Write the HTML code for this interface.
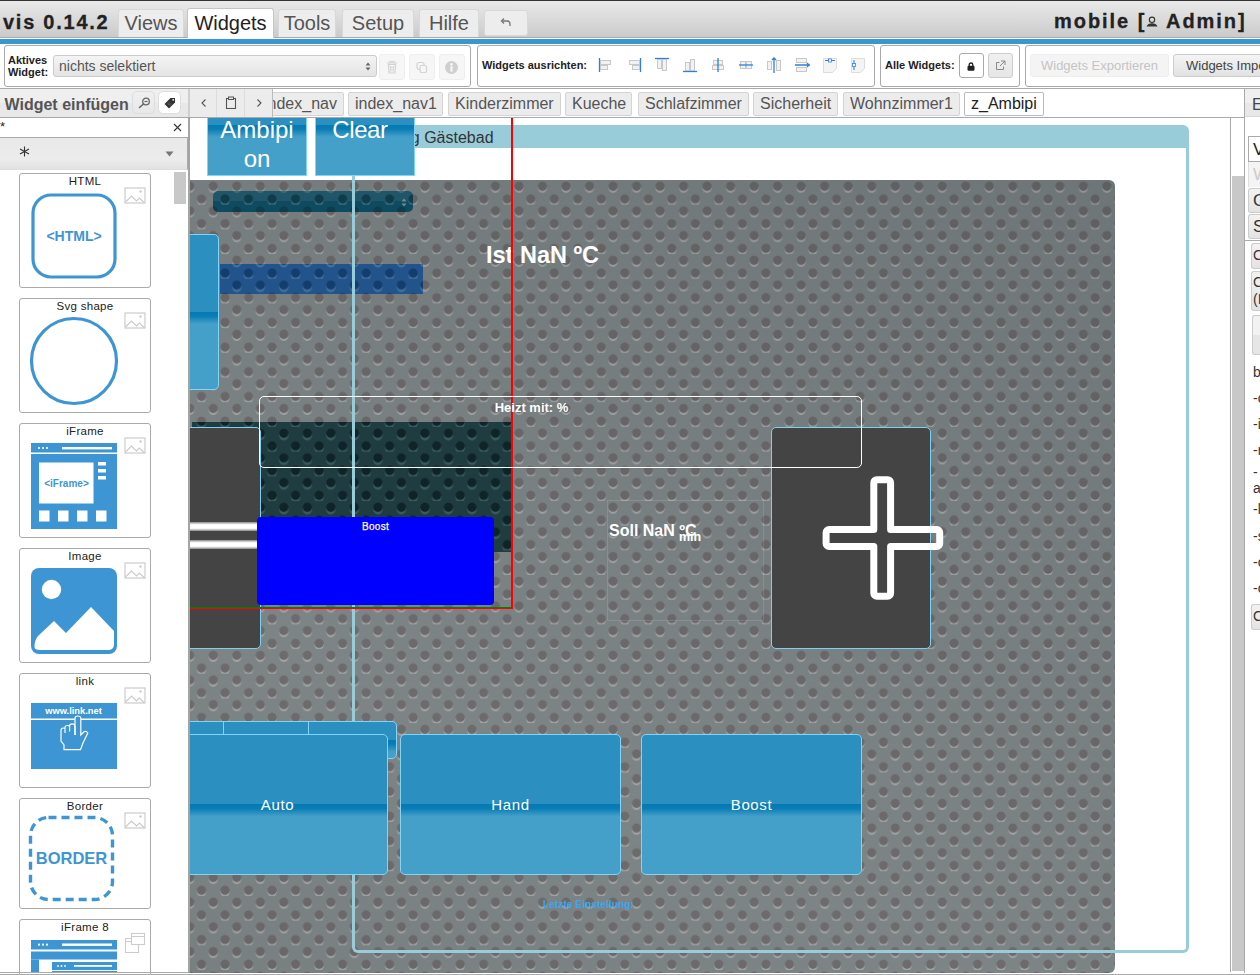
<!DOCTYPE html>
<html><head><meta charset="utf-8">
<style>
*{box-sizing:border-box;margin:0;padding:0}
html,body{width:1260px;height:975px;overflow:hidden;background:#fff;font-family:"Liberation Sans",sans-serif;color:#222;position:relative}
.a{position:absolute}
#top{left:0;top:0;width:1260px;height:38px;border-top:1px solid #333;background:linear-gradient(#e9e9e9,#cbcbcb);border-bottom:1px solid #aaa}
#title{left:3px;top:9.8px;font-size:20px;font-weight:bold;letter-spacing:1.75px;-webkit-text-stroke:0.3px #222;color:#222;line-height:24px}
.tab{top:9px;height:28px;background:#ededed;border:1px solid #d8d8d8;border-bottom:none;border-radius:3px 3px 0 0;font-size:20px;color:#555;line-height:27px;text-align:center}
.tab.act{background:#fff;border-color:#c5c5c5;color:#222;top:8px;height:30px;line-height:29px}
#blue{left:0;top:39px;width:1260px;height:5px;background:#3a96d2}
#user,#user2{top:9px;font-size:20px;font-weight:bold;letter-spacing:1.95px;-webkit-text-stroke:0.3px #222;color:#222;line-height:24px;white-space:nowrap}
#user2{left:1166px}
.panel{top:45px;height:42px;border:1px solid #aaa;border-radius:3px;background:#fff}
#tbline{left:0;top:88px;width:1260px;height:1px;background:#aaa}

.lbl{font-size:11px;font-weight:bold;color:#222;line-height:12px}
.sel{border:1px solid #ccc;border-radius:3px;background:linear-gradient(#f4f4f4,#e4e4e4);font-size:14px;color:#555;line-height:20px;padding-left:5px}
.ibtn{width:26px;height:26px;background:#f6f6f6;border:1px solid #eee;border-radius:3px}
.alg{top:57px;width:16px;height:16px}
.xbtn{white-space:nowrap;overflow:hidden;border:1px solid #ddd;border-radius:3px;font-size:13px;line-height:21px;text-align:center}

#row3{left:0;top:89px;width:1245px;height:29px;background:#fff;border-bottom:1px solid #aaa}
#row3l{left:0;top:89px;width:188px;height:28px;background:linear-gradient(#efefef 0,#efefef 50%,#e8e8e8 50%,#e8e8e8 100%)}
#wein{left:4.5px;top:94.5px;font-size:16px;font-weight:bold;color:#555;line-height:19px}
.sbtn{top:91px;width:23px;height:23px;border:1px solid #ddd;border-radius:5px;background:linear-gradient(#f0f0f0,#e8e8e8)}
#sep{left:188px;top:117px;width:2px;height:856px;background:#a4a4a4}
.nav{top:89px;height:28px;width:28px;border-right:1px solid #dcdcdc;background:#ececec}
.vt{top:92px;height:24px;border:1px solid #d4d4d4;background:#ececec;font-size:16px;color:#555;line-height:22px;text-align:left;padding-left:6px;border-radius:2px;white-space:nowrap}
.vt.act{background:#fff;border-color:#bbb;color:#222}
#filt{left:0;top:118px;width:188px;height:20px;background:#fff;border-bottom:1px solid #aaa}
#dd{left:0;top:138px;width:188px;height:32px;background:linear-gradient(#e9e9e9,#ececec 70%,#e2e2e2);border-bottom:1px solid #ddd;border-right:1px solid #aaa}
.card{left:19px;width:132px;height:115px;border:1px solid #aaa;border-radius:3px;background:#fff}
.ctit{left:19px;width:132px;text-align:center;font-size:11.5px;color:#222;line-height:13px;letter-spacing:0.3px}

#cv{left:190px;top:118px;width:1040px;height:855px;overflow:hidden;background:#fff}
#cv .a{position:absolute}
.perf{background-color:#7b8284;
 background-image:
  radial-gradient(circle at 5.88px 6.17px,#6a6869 0,#6a6869 4.1px,rgba(106,104,105,0) 5px),
  radial-gradient(circle at 17.64px 18.92px,#6a6869 0,#6a6869 4.1px,rgba(106,104,105,0) 5px),
  radial-gradient(circle at 5.88px 8.37px,#a0a3a4 0,#a0a3a4 4.0px,rgba(160,163,164,0) 4.9px),
  radial-gradient(circle at 17.64px 21.12px,#a0a3a4 0,#a0a3a4 4.0px,rgba(160,163,164,0) 4.9px);
 background-size:23.52px 24.70px}
.jqm{background:linear-gradient(#2b8fc0 0,#2b8fc0 50%,#0479b3 50%,#0a7db5 calc(50% + 4px),#45a0c9 calc(50% + 12px),#45a0c9 100%);border:1px solid #7fd4f8;border-radius:5px;color:#fff;text-align:center}
.frm{border:3px solid #99ccd9;border-top:none;border-radius:0 0 6px 6px}
</style></head><body>
<div id="top" class="a"></div>
<div id="title" class="a">vis 0.14.2</div>
<div class="a tab" style="left:118px;width:66px">Views</div>
<div class="a tab act" style="left:187px;width:87px">Widgets</div>
<div class="a tab" style="left:278px;width:58px">Tools</div>
<div class="a tab" style="left:342px;width:72px">Setup</div>
<div class="a tab" style="left:419px;width:60px">Hilfe</div>
<div class="a tab" style="left:484px;width:44px;top:10px;height:26px;border-radius:3px;border-bottom:1px solid #d8d8d8"></div>
<div id="user" class="a" style="left:1054px">mobile [</div><div id="user2" class="a">Admin]</div>
<svg class="a" style="left:1146px;top:16px" width="12" height="11" viewBox="0 0 12 11"><circle cx="6" cy="3.8" r="2.7" fill="none" stroke="#333" stroke-width="1.1"/><path d="M0.5 10.5Q2 7.2 6 7.2T11.5 10.5Z" fill="#333"/></svg>
<svg class="a" style="left:500px;top:17px" width="12" height="10" viewBox="0 0 12 10"><path d="M4 1.5L1.5 4 4 6.5" fill="none" stroke="#777" stroke-width="1.3"/><path d="M2 4H7Q10 4 10 7V9" fill="none" stroke="#777" stroke-width="1.3"/></svg>
<div id="blue" class="a"></div>

<div class="a panel" style="left:4px;width:467px"></div>
<div class="a panel" style="left:477px;width:398px"></div>
<div class="a panel" style="left:880px;width:140px"></div>
<div class="a panel" style="left:1025px;width:260px"></div>
<div id="tbline" class="a"></div>

<div class="a lbl" style="left:8px;top:54px">Aktives<br>Widget:</div>
<div class="a sel" style="left:53px;top:55px;width:324px;height:22px">nichts selektiert</div>
<svg class="a" style="left:364.5px;top:62px" width="6" height="9" viewBox="0 0 6 9"><path d="M3 0.5L5.5 3.6H0.5Z M3 8.5L5.5 5.4H0.5Z" fill="#666"/></svg>
<div class="a ibtn" style="left:379px;top:54px"></div>
<div class="a ibtn" style="left:409px;top:54px"></div>
<div class="a ibtn" style="left:439px;top:54px"></div>
<svg class="a" style="left:384px;top:59px" width="16" height="16" viewBox="0 0 16 16"><g fill="none" stroke="#d2d2d2" stroke-width="1.2"><path d="M3 4h10M6 3.8V2.5h4v1.3M4.5 5.5h7l-0.6 8.5H5.1Z"/><path d="M6.8 7v5.5M9.2 7v5.5"/></g></svg>
<svg class="a" style="left:414px;top:59px" width="16" height="16" viewBox="0 0 16 16"><g fill="none" stroke="#d2d2d2" stroke-width="1.2"><rect x="3" y="3.5" width="7" height="7" rx="2"/><rect x="6" y="6.5" width="6.5" height="7" rx="1.5" fill="#f6f6f6"/></g></svg>
<svg class="a" style="left:444px;top:60px" width="15" height="15" viewBox="0 0 15 15"><circle cx="7.5" cy="7.5" r="6.5" fill="#cfcfcf"/><rect x="6.4" y="6.2" width="2.2" height="5.5" fill="#f6f6f6"/><circle cx="7.5" cy="4.2" r="1.3" fill="#f6f6f6"/></svg>

<div class="a lbl" style="left:482px;top:59px">Widgets ausrichten:</div>
<svg class="a alg" style="left:598px" width="16" height="16" viewBox="0 0 16 16"><path d="M1.5 1v14" stroke="#2d7fe0" stroke-width="1.3"/><rect x="2.5" y="3.5" width="10" height="4" fill="#f2f2f2" stroke="#c8c8c8"/><rect x="2.5" y="8.5" width="7" height="4" fill="#f2f2f2" stroke="#c8c8c8"/></svg>
<svg class="a alg" style="left:626px" width="16" height="16" viewBox="0 0 16 16"><path d="M14.5 1v14" stroke="#2d7fe0" stroke-width="1.3"/><rect x="3.5" y="3.5" width="10" height="4" fill="#f2f2f2" stroke="#c8c8c8"/><rect x="6.5" y="8.5" width="7" height="4" fill="#f2f2f2" stroke="#c8c8c8"/></svg>
<svg class="a alg" style="left:654px" width="16" height="16" viewBox="0 0 16 16"><path d="M1 1.5h14" stroke="#2d7fe0" stroke-width="1.3"/><rect x="3.5" y="2.5" width="4" height="9" fill="#f2f2f2" stroke="#c8c8c8"/><rect x="8.5" y="2.5" width="4" height="11" fill="#f2f2f2" stroke="#c8c8c8"/></svg>
<svg class="a alg" style="left:682px" width="16" height="16" viewBox="0 0 16 16"><path d="M1 14.5h14" stroke="#2d7fe0" stroke-width="1.3"/><rect x="3.5" y="5.5" width="4" height="8" fill="#f2f2f2" stroke="#c8c8c8"/><rect x="8.5" y="2.5" width="4" height="11" fill="#f2f2f2" stroke="#c8c8c8"/></svg>
<svg class="a alg" style="left:710px" width="16" height="16" viewBox="0 0 16 16"><rect x="3.5" y="3.5" width="9" height="4" fill="#f2f2f2" stroke="#c8c8c8"/><rect x="2.5" y="8.5" width="11" height="4" fill="#f2f2f2" stroke="#c8c8c8"/><path d="M8 1v14" stroke="#2d7fe0" stroke-width="1.3"/></svg>
<svg class="a alg" style="left:738px" width="16" height="16" viewBox="0 0 16 16"><rect x="2.5" y="4.5" width="5" height="7" fill="#f2f2f2" stroke="#c8c8c8"/><rect x="8.5" y="4.5" width="5" height="7" fill="#f2f2f2" stroke="#c8c8c8"/><path d="M1 8h14" stroke="#2d7fe0" stroke-width="1.3"/></svg>
<svg class="a alg" style="left:766px" width="16" height="16" viewBox="0 0 16 16"><rect x="1.5" y="4.5" width="4" height="8" fill="#f2f2f2" stroke="#c8c8c8"/><rect x="10.5" y="3.5" width="4" height="10" fill="#f2f2f2" stroke="#c8c8c8"/><path d="M8 1v15M6 3l2-2 2 2" stroke="#2d7fe0" stroke-width="1.3" fill="none"/></svg>
<svg class="a alg" style="left:794px" width="16" height="16" viewBox="0 0 16 16"><rect x="2.5" y="1.5" width="10" height="4" fill="#f2f2f2" stroke="#c8c8c8"/><rect x="2.5" y="10.5" width="10" height="4" fill="#f2f2f2" stroke="#c8c8c8"/><path d="M1 8h15M13 6l2 2-2 2" stroke="#2d7fe0" stroke-width="1.3" fill="none"/></svg>
<svg class="a alg" style="left:822px" width="16" height="16" viewBox="0 0 16 16"><path d="M1.5 1.5h13v10l-4 4h-9z" fill="#f4f4f4" stroke="#ddd"/><path d="M3 3.5h10" stroke="#2d7fe0" stroke-width="1"/><rect x="6.5" y="2" width="3" height="3" fill="#fff" stroke="#2d7fe0" stroke-width="0.8"/></svg>
<svg class="a alg" style="left:850px" width="16" height="16" viewBox="0 0 16 16"><path d="M1.5 1.5h13v10l-4 4h-9z" fill="#f4f4f4" stroke="#ddd"/><path d="M4 3v10" stroke="#2d7fe0" stroke-width="1"/><rect x="2.5" y="6.5" width="3" height="3" fill="#fff" stroke="#2d7fe0" stroke-width="0.8"/></svg>
<div class="a lbl" style="left:885px;top:59px">Alle Widgets:</div>
<div class="a xbtn" style="left:959px;top:53px;width:25px;height:25px;background:#fff;border-color:#aaa"></div>
<svg class="a" style="left:967px;top:61.5px" width="8" height="9" viewBox="0 0 8 9"><path d="M2.2 4V2.8a1.8 1.8 0 0 1 3.6 0V4" fill="none" stroke="#222" stroke-width="1.3"/><rect x="0.5" y="3.8" width="7" height="5" rx="1.2" fill="#222"/></svg>
<div class="a xbtn" style="left:988px;top:53px;width:25px;height:25px;background:linear-gradient(#f0f0f0,#e6e6e6);border-color:#ccc"></div>
<svg class="a" style="left:995px;top:60px" width="11" height="11" viewBox="0 0 11 11"><g fill="none" stroke="#888" stroke-width="1"><path d="M4.5 2.5H1.5v7h7V6.5"/><path d="M6 1h4v4M10 1L5 6"/></g></svg>
<div class="a xbtn" style="left:1030px;top:54px;width:139px;height:23px;background:#f4f4f4;border-color:#eee;color:#c4c4c4">Widgets Exportieren</div>
<div class="a xbtn" style="left:1173px;top:54px;width:120px;height:23px;background:linear-gradient(#f4f4f4,#e2e2e2);border-color:#ccc;color:#444;text-align:left;padding-left:12px">Widgets Importieren</div>

<div id="row3" class="a"></div><div id="row3l" class="a"></div><div class="a" style="left:188px;top:89px;width:2px;height:28px;background:#cfcfcf"></div>
<div id="wein" class="a">Widget einfügen</div>
<div class="a sbtn" style="left:132px"></div>
<svg class="a" style="left:138px;top:97px" width="13" height="12" viewBox="0 0 13 12"><circle cx="8" cy="4.5" r="3.3" fill="none" stroke="#666" stroke-width="1.3"/><path d="M6.5 4.5h3" stroke="#666" stroke-width="1.2"/><path d="M5.5 7L1.5 10.5" stroke="#666" stroke-width="1.6" stroke-linecap="round"/></svg>
<div class="a sbtn" style="left:158px;background:#fff"></div>
<svg class="a" style="left:164px;top:97px" width="12" height="12" viewBox="0 0 12 12"><path d="M6.5 1H11V5.5L5 11.5 0.5 7Z" fill="#333"/><circle cx="9.2" cy="2.8" r="0.9" fill="#fff"/><path d="M4 6.5l2 2M5 5.5l2 2" stroke="#888" stroke-width="0.7"/></svg>
<div id="sep" class="a"></div>
<div class="a vt" style="left:257px;width:87px">index_nav</div>
<div class="a vt" style="left:348px;width:95px">index_nav1</div>
<div class="a vt" style="left:448px;width:113px">Kinderzimmer</div>
<div class="a vt" style="left:565px;width:67px">Kueche</div>
<div class="a vt" style="left:638px;width:111px">Schlafzimmer</div>
<div class="a vt" style="left:753px;width:85px">Sicherheit</div>
<div class="a vt" style="left:843px;width:117px">Wohnzimmer1</div>
<div class="a vt act" style="left:964px;width:80px">z_Ambipi</div>
<div class="a nav" style="left:190px;width:27px"></div>
<div class="a nav" style="left:217px;width:28px"></div>
<div class="a nav" style="left:245px;width:28px;border-right:1px solid #bbb"></div>
<svg class="a" style="left:200px;top:98px" width="8" height="10" viewBox="0 0 8 10"><path d="M5.5 1.5L2 5l3.5 3.5" fill="none" stroke="#555" stroke-width="1.1"/></svg>
<svg class="a" style="left:225px;top:96px" width="12" height="13" viewBox="0 0 12 13"><rect x="1.5" y="2.5" width="9" height="10" fill="none" stroke="#555" stroke-width="1.1"/><rect x="3.5" y="1" width="5" height="2.5" fill="#e8e8e8" stroke="#555" stroke-width="1"/></svg>
<svg class="a" style="left:255px;top:98px" width="8" height="10" viewBox="0 0 8 10"><path d="M2.5 1.5L6 5 2.5 8.5" fill="none" stroke="#555" stroke-width="1.1"/></svg>
<div id="filt" class="a"></div>
<div class="a" style="left:0;top:119px;font-size:13px;color:#222">*</div>
<svg class="a" style="left:173px;top:123px" width="9" height="9" viewBox="0 0 9 9"><path d="M1 1l7 7M8 1L1 8" stroke="#333" stroke-width="1.1"/></svg>
<div id="dd" class="a"></div>
<svg class="a" style="left:19px;top:146px" width="11" height="11" viewBox="0 0 11 11"><path d="M5.5 0.5v10M1 3l9 5M10 3L1 8" stroke="#333" stroke-width="1.1"/></svg>
<svg class="a" style="left:165px;top:151px" width="9" height="6" viewBox="0 0 9 6"><path d="M0.5 0.5h8L4.5 5.5Z" fill="#777"/></svg>
<div class="a" style="left:174px;top:172px;width:12px;height:32px;background:#c8c8c8"></div>
<div class="a card" style="top:173px"></div><div class="a ctit" style="top:175px">HTML</div>
<svg class="a" style="left:124px;top:187px" width="22" height="18" viewBox="0 0 22 18"><rect x="1" y="1" width="20" height="15" fill="none" stroke="#ccc" stroke-width="1.2"/><path d="M1.5 15l6-6 5 5 3-3 5 5" fill="none" stroke="#ccc" stroke-width="1.2"/><circle cx="16.5" cy="4.5" r="1.2" fill="#ccc"/></svg>
<div class="a card" style="top:298px"></div><div class="a ctit" style="top:300px">Svg shape</div>
<svg class="a" style="left:124px;top:312px" width="22" height="18" viewBox="0 0 22 18"><rect x="1" y="1" width="20" height="15" fill="none" stroke="#ccc" stroke-width="1.2"/><path d="M1.5 15l6-6 5 5 3-3 5 5" fill="none" stroke="#ccc" stroke-width="1.2"/><circle cx="16.5" cy="4.5" r="1.2" fill="#ccc"/></svg>
<div class="a card" style="top:423px"></div><div class="a ctit" style="top:425px">iFrame</div>
<svg class="a" style="left:124px;top:437px" width="22" height="18" viewBox="0 0 22 18"><rect x="1" y="1" width="20" height="15" fill="none" stroke="#ccc" stroke-width="1.2"/><path d="M1.5 15l6-6 5 5 3-3 5 5" fill="none" stroke="#ccc" stroke-width="1.2"/><circle cx="16.5" cy="4.5" r="1.2" fill="#ccc"/></svg>
<div class="a card" style="top:548px"></div><div class="a ctit" style="top:550px">Image</div>
<svg class="a" style="left:124px;top:562px" width="22" height="18" viewBox="0 0 22 18"><rect x="1" y="1" width="20" height="15" fill="none" stroke="#ccc" stroke-width="1.2"/><path d="M1.5 15l6-6 5 5 3-3 5 5" fill="none" stroke="#ccc" stroke-width="1.2"/><circle cx="16.5" cy="4.5" r="1.2" fill="#ccc"/></svg>
<div class="a card" style="top:673px"></div><div class="a ctit" style="top:675px">link</div>
<svg class="a" style="left:124px;top:687px" width="22" height="18" viewBox="0 0 22 18"><rect x="1" y="1" width="20" height="15" fill="none" stroke="#ccc" stroke-width="1.2"/><path d="M1.5 15l6-6 5 5 3-3 5 5" fill="none" stroke="#ccc" stroke-width="1.2"/><circle cx="16.5" cy="4.5" r="1.2" fill="#ccc"/></svg>
<div class="a card" style="top:798px;height:111px"></div><div class="a ctit" style="top:800px">Border</div>
<svg class="a" style="left:124px;top:812px" width="22" height="18" viewBox="0 0 22 18"><rect x="1" y="1" width="20" height="15" fill="none" stroke="#ccc" stroke-width="1.2"/><path d="M1.5 15l6-6 5 5 3-3 5 5" fill="none" stroke="#ccc" stroke-width="1.2"/><circle cx="16.5" cy="4.5" r="1.2" fill="#ccc"/></svg>
<div class="a card" style="top:919px"></div><div class="a ctit" style="top:921px">iFrame 8</div>
<svg class="a" style="left:124px;top:931.5px" width="22" height="22" viewBox="0 0 22 22"><rect x="7.5" y="1.5" width="13" height="11" fill="#fff" stroke="#ccc" stroke-width="1.1"/><path d="M7.5 4.5h13" stroke="#ccc"/><path d="M7.5 6.5h-6v14h13v-8" fill="none" stroke="#ccc" stroke-width="1.1"/><path d="M1.5 9.5h6" stroke="#ccc"/></svg>


<svg class="a" style="left:30px;top:192px" width="88" height="88" viewBox="0 0 88 88"><rect x="3" y="3" width="82" height="82" rx="18" fill="none" stroke="#3d96d3" stroke-width="3.2"/><text x="44" y="49" text-anchor="middle" font-family="Liberation Sans" font-weight="bold" font-size="14" fill="#3d96d3">&lt;HTML&gt;</text></svg>
<svg class="a" style="left:29px;top:316px" width="90" height="90" viewBox="0 0 90 90"><circle cx="45" cy="45" r="42.5" fill="none" stroke="#3d96d3" stroke-width="3.2"/></svg>
<svg class="a" style="left:31px;top:443px" width="86" height="86" viewBox="0 0 86 86"><rect x="0" y="0" width="86" height="86" fill="#3d96d3"/><rect x="0" y="9.5" width="86" height="1.5" fill="#fff"/><circle cx="8" cy="5" r="1.1" fill="#fff"/><circle cx="12" cy="5" r="1.1" fill="#fff"/><circle cx="16" cy="5" r="1.1" fill="#fff"/><rect x="31" y="4" width="50" height="2.4" fill="#fff"/><rect x="8" y="19.5" width="54.5" height="41" fill="#fff"/><rect x="67" y="19" width="8" height="3.5" fill="#fff"/><rect x="67" y="26" width="8" height="3.5" fill="#fff"/><rect x="67" y="33" width="8" height="3.5" fill="#fff"/><text x="35.5" y="44" text-anchor="middle" font-family="Liberation Sans" font-weight="bold" font-size="10" fill="#3d96d3">&lt;iFrame&gt;</text><rect x="8" y="67.5" width="10.5" height="11" fill="#fff"/><rect x="27" y="67.5" width="10.5" height="11" fill="#fff"/><rect x="46" y="67.5" width="10.5" height="11" fill="#fff"/><rect x="65" y="67.5" width="10.5" height="11" fill="#fff"/></svg>
<svg class="a" style="left:31px;top:568px" width="86" height="86" viewBox="0 0 86 86"><rect x="0" y="0" width="86" height="86" rx="8" fill="#3d96d3"/><circle cx="20.5" cy="21.5" r="9.7" fill="#fff"/><path d="M3.5 79Q3.5 72 7 68L23 53 35 65 60 39 83 63V76Q83 82 77 82H9Q3.5 82 3.5 79Z" fill="#fff"/></svg>
<svg class="a" style="left:31px;top:703px" width="86" height="66" viewBox="0 0 86 66"><rect x="0" y="0" width="86" height="66" fill="#3d96d3"/><rect x="0" y="15.5" width="86" height="1.5" fill="#fff"/><text x="42.5" y="10.8" text-anchor="middle" font-family="Liberation Sans" font-weight="bold" font-size="9.3" fill="#fff">www.link.net</text><path d="M44 32V15.5Q44 13 46.9 13T49.8 15.5V32L53 28.8Q55.5 27.5 56.8 30L52 40 49.5 46.6H33V42L30 38V27.5Q30 25 32.2 25 34 25 34 26.5V24.5Q34 22.5 36.5 22.5 38.6 22.5 38.6 24.5V23Q38.6 20.8 41 20.8 44 20.8 44 23" fill="#3d96d3" stroke="#fff" stroke-width="1.2"/><path d="M34 26.5V30M38.6 24.5V28.5M44 23V32" fill="none" stroke="#fff" stroke-width="1.2"/></svg>
<svg class="a" style="left:28px;top:815px" width="88" height="87" viewBox="0 0 88 87"><rect x="2.5" y="2.5" width="82" height="82" rx="18" fill="none" stroke="#3d96d3" stroke-width="3.4" stroke-dasharray="8 5"/><text x="43.5" y="49" text-anchor="middle" font-family="Liberation Sans" font-weight="bold" font-size="16.5" fill="#3d96d3">BORDER</text></svg>
<svg class="a" style="left:31px;top:940px" width="86" height="32" viewBox="0 0 86 32"><rect x="0" y="0" width="86" height="9.5" fill="#3d96d3"/><circle cx="8" cy="4.7" r="1.1" fill="#fff"/><circle cx="12" cy="4.7" r="1.1" fill="#fff"/><circle cx="16" cy="4.7" r="1.1" fill="#fff"/><rect x="31" y="3.5" width="50" height="2.4" fill="#fff"/><rect x="0" y="11.5" width="86" height="8" fill="#3d96d3"/><rect x="0" y="19.5" width="8" height="13" fill="#3d96d3"/><rect x="21" y="22" width="65" height="8" fill="#3d96d3"/><circle cx="27" cy="26" r="0.9" fill="#fff"/><circle cx="30.5" cy="26" r="0.9" fill="#fff"/><circle cx="34" cy="26" r="0.9" fill="#fff"/><rect x="43" y="25" width="38" height="1.8" fill="#fff"/><rect x="21" y="31" width="65" height="2" fill="#3d96d3"/></svg>
<div id="cv" class="a">
 <div class="a perf" style="left:-10px;top:62px;width:935px;height:792.5px;border-radius:6px;background-position:3.86px 0px"></div>
 <div class="a" style="left:-10px;top:62px;width:935px;height:792.5px;border-radius:6px;background:linear-gradient(205deg,rgba(0,15,20,0.11) 0%,rgba(0,15,20,0.03) 40%,rgba(255,255,255,0.02) 70%,rgba(0,0,0,0.02) 100%)"></div>
 <!-- inner lighter region of selected group -->
 <!-- dark teal select -->
 <div class="a" style="left:23px;top:73px;width:200px;height:21px;border-radius:5px;background-image:radial-gradient(circle at 5.88px 6.17px,#0f3b4b 0,#0f3b4b 4.1px,transparent 5px),radial-gradient(circle at 17.64px 18.92px,#0f3b4b 0,#0f3b4b 4.1px,transparent 5px),radial-gradient(circle at 5.88px 8.37px,#3b7080 0,#3b7080 4.0px,transparent 4.9px),radial-gradient(circle at 17.64px 21.12px,#3b7080 0,#3b7080 4.0px,transparent 4.9px),linear-gradient(#215669 0,#215669 50%,#0f4b60 50%,#0f4b60 100%);background-size:23.52px 24.70px,23.52px 24.70px,23.52px 24.70px,23.52px 24.70px,100% 100%;background-position:17.9px 13.7px,17.9px 13.7px,17.9px 13.7px,17.9px 13.7px,0 0"></div>
 <svg class="a" style="left:211px;top:80px" width="6" height="9" viewBox="0 0 6 9"><path d="M3 0.5L5.5 3.5H0.5ZM3 8.5L5.5 5.5H0.5Z" fill="#6f8c94"/></svg>
 <!-- left blue widget -->
 <div class="a jqm" style="left:-20px;top:116px;width:49px;height:156px"></div>
 <!-- dark blue bar -->
 <div class="a" style="left:30px;top:146px;width:203px;height:30px;background-color:#22538a;background-image:radial-gradient(circle at 5.88px 6.17px,#133d6d 0,#133d6d 4.1px,transparent 5px),radial-gradient(circle at 17.64px 18.92px,#133d6d 0,#133d6d 4.1px,transparent 5px),radial-gradient(circle at 5.88px 8.77px,#40709e 0,#40709e 4.2px,transparent 5px),radial-gradient(circle at 17.64px 21.52px,#40709e 0,#40709e 4.2px,transparent 5px);background-size:23.52px 24.70px;background-position:10.9px 14.8px"></div>
 <!-- Ist NaN -->
 <div class="a" style="left:296px;top:123px;font-size:23.5px;font-weight:bold;color:#fff;line-height:28px;white-space:nowrap">Ist NaN ºC</div>
 <!-- dark teal region -->
 <div class="a" style="left:2px;top:304px;width:319px;height:130px;background-color:#1f3c41;background-image:radial-gradient(circle at 5.88px 6.17px,#0e2427 0,#0e2427 4.1px,transparent 5px),radial-gradient(circle at 17.64px 18.92px,#0e2427 0,#0e2427 4.1px,transparent 5px),radial-gradient(circle at 5.88px 8.77px,#3a5a5f 0,#3a5a5f 4.2px,transparent 5px),radial-gradient(circle at 17.64px 21.52px,#3a5a5f 0,#3a5a5f 4.2px,transparent 5px);background-size:23.52px 24.70px;background-position:15.38px 5.0px"></div>
 <!-- left dark grey widget -->
 <div class="a" style="left:-20px;top:309px;width:91px;height:222px;background:#444;border:1px solid #7fd0f0;border-radius:5px"></div>
 <div class="a" style="left:0;top:404px;width:67px;height:9px;background:linear-gradient(#888,#fff 30%,#fff 70%,#888)"></div>
 <div class="a" style="left:0;top:422px;width:67px;height:9px;background:linear-gradient(#888,#fff 30%,#fff 70%,#888)"></div>
 <!-- faint rect -->
 <div class="a" style="left:417px;top:382px;width:157px;height:121px;border:1px solid rgba(255,255,255,0.12)"></div>
 <!-- Soll -->
 <div class="a" style="left:419px;top:404px;font-size:16px;font-weight:bold;color:#fff;line-height:18px;white-space:nowrap">Soll NaN ºC</div>
 <div class="a" style="left:489px;top:412px;font-size:12.5px;font-weight:bold;color:#fff;line-height:14px">min</div>
 <!-- view frame -->
 <div class="a" style="left:162px;top:7px;width:837px;height:23px;background:#99ccd9;border-radius:6px 6px 0 0"></div>
 <div class="a" style="left:171px;top:10px;font-size:16px;color:#333;line-height:19px;white-space:nowrap">Heizung Gästebad</div>
 <div class="a frm" style="left:162px;top:30px;width:837px;height:805px"></div>
 <!-- red/green outline -->
 <div class="a" style="left:-10px;top:-10px;width:332px;height:500px;border-right:1px solid #008000;border-bottom:1px solid #008000"></div>
 <div class="a" style="left:-10px;top:-10px;width:333px;height:501px;border-right:1px solid #f00;border-bottom:1px solid #f00"></div>
 <!-- blue boost box -->
 <div class="a" style="left:67px;top:399px;width:237px;height:88px;background:#0000ff;border-radius:4px;color:#fff;text-align:center;font-size:10px;font-weight:normal;-webkit-text-stroke:0.25px #fff;line-height:14px;padding-top:2.5px;letter-spacing:0.3px">Boost</div>
 <!-- plus widget -->
 <div class="a" style="left:581px;top:309px;width:160px;height:222px;background:#444;border:1px solid #7fd0f0;border-radius:5px"></div>
 <svg class="a" style="left:630px;top:356px" width="126" height="126" viewBox="0 0 126 126"><path d="M56.8 5.7H67.6A3 3 0 0 1 70.6 8.7V55.5H116.7A3 3 0 0 1 119.7 58.5V69.5A3 3 0 0 1 116.7 72.5H70.6V119.2A3 3 0 0 1 67.6 122.2H56.8A3 3 0 0 1 53.8 119.2V72.5H9.1A3 3 0 0 1 6.1 69.5V58.5A3 3 0 0 1 9.1 55.5H53.8V8.7A3 3 0 0 1 56.8 5.7Z" fill="none" stroke="#fff" stroke-width="7" stroke-linejoin="round"/></svg>
 <!-- Heizt mit box -->
 <div class="a" style="left:69px;top:278px;width:603px;height:72px;border:1px solid #fff;border-radius:5px"></div>
 <div class="a" style="left:69px;top:282px;width:545px;text-align:center;font-size:13px;font-weight:bold;color:#fff;line-height:15px">Heizt mit: %</div>
 <!-- segmented -->
 <div class="a jqm" style="left:-20px;top:603px;width:227px;height:38px"></div>
 <div class="a" style="left:33px;top:604px;width:1px;height:13px;background:#7fd4f8"></div>
 <div class="a" style="left:118px;top:604px;width:1px;height:13px;background:#7fd4f8"></div>
 <!-- big buttons -->
 <div class="a jqm" style="left:-20px;top:616px;width:218px;height:141px;font-size:15px;line-height:140px;padding-right:3px;letter-spacing:0.6px">Auto</div>
 <div class="a jqm" style="left:210px;top:616px;width:221px;height:141px;font-size:15px;line-height:140px;letter-spacing:0.6px">Hand</div>
 <div class="a jqm" style="left:451px;top:616px;width:221px;height:141px;font-size:15px;line-height:140px;letter-spacing:0.6px">Boost</div>
 <!-- top buttons -->
 <div class="a jqm" style="left:17px;top:-44px;width:100px;height:102px;border-radius:0;font-size:24px;line-height:29px;padding-top:39.5px">Ambipi<br>on</div>
 <div class="a jqm" style="left:125px;top:-44px;width:100px;height:102px;border-radius:0;font-size:24px;line-height:29px;padding-top:39.5px;padding-right:10px;letter-spacing:-0.4px">Clear</div>
 <div class="a" style="left:353px;top:780.5px;font-size:10px;font-weight:bold;color:#38a8ee;white-space:nowrap;letter-spacing:0.1px">Letzte Einstellung:</div>
</div>
<!-- canvas scrollbar -->
<div class="a" style="left:1230px;top:118px;width:1px;height:854px;background:#aaa"></div>
<div class="a" style="left:1232px;top:176px;width:12px;height:795px;background:#c8c8c8"></div>
<div class="a" style="left:1244px;top:89px;width:1px;height:884px;background:#aaa"></div>
<!-- right panel -->
<div class="a" style="left:1245px;top:89px;width:15px;height:28px;background:linear-gradient(#efefef 50%,#e8e8e8 50%);border-bottom:1px solid #d8d8d8"></div>
<div class="a" style="left:1252px;top:96px;font-size:16px;line-height:18px;color:#444">E</div>

<div class="a" style="left:1248px;top:136px;width:20px;height:26px;border:1px solid #aaa;border-right:none;background:#fff"></div>
<div class="a" style="left:1253px;top:140px;font-size:17px;color:#222;line-height:20px">V</div>
<div class="a" style="left:1248px;top:162px;width:20px;height:25px;border-left:1px solid #ddd;background:#f4f4f4"></div>
<div class="a" style="left:1253px;top:165px;font-size:17px;color:#ccc;line-height:20px">W</div>
<div class="a" style="left:1248px;top:188px;width:20px;height:25px;border:1px solid #ccc;border-right:none;border-radius:3px 0 0 3px;background:linear-gradient(#f2f2f2,#e3e3e3)"></div>
<div class="a" style="left:1253px;top:191px;font-size:17px;color:#333;line-height:20px">C</div>
<div class="a" style="left:1248px;top:214px;width:20px;height:25px;border:1px solid #ccc;border-right:none;border-radius:3px 0 0 3px;background:linear-gradient(#f2f2f2,#e3e3e3)"></div>
<div class="a" style="left:1253px;top:217px;font-size:17px;color:#333;line-height:20px">S</div>
<div class="a" style="left:1245px;top:240px;width:15px;height:1px;background:#aaa"></div>
<div class="a" style="left:1251px;top:243px;width:20px;height:26px;border:1px solid #ccc;border-right:none;border-radius:3px 0 0 3px;background:linear-gradient(#f2f2f2,#e3e3e3)"></div>
<div class="a" style="left:1253px;top:247px;font-size:14px;color:#333;line-height:17px;white-space:nowrap">C</div>
<div class="a" style="left:1251px;top:271px;width:20px;height:40px;border:1px solid #ccc;border-right:none;border-radius:3px 0 0 3px;background:linear-gradient(#f2f2f2,#e3e3e3)"></div>
<div class="a" style="left:1253px;top:274px;font-size:14px;color:#333;line-height:17px;white-space:nowrap">C<br>(I</div>
<div class="a" style="left:1252px;top:315px;width:20px;height:40px;border:1px solid #ccc;border-right:none;border-radius:3px 0 0 3px;background:linear-gradient(#f2f2f2 50%,#e6e6e6 50%)"></div>
<div class="a" style="left:1253px;top:363.5px;font-size:14px;color:#333;line-height:17px;white-space:nowrap">b</div>
<div class="a" style="left:1253px;top:389.8px;font-size:14px;color:#333;line-height:17px;white-space:nowrap">-c</div>
<div class="a" style="left:1253px;top:416.0px;font-size:14px;color:#333;line-height:17px;white-space:nowrap">-i</div>
<div class="a" style="left:1253px;top:442.3px;font-size:14px;color:#333;line-height:17px;white-space:nowrap">-r</div>
<div class="a" style="left:1253px;top:463.6px;font-size:14px;color:#333;line-height:17px;white-space:nowrap">-</div>
<div class="a" style="left:1253px;top:480.0px;font-size:14px;color:#333;line-height:17px;white-space:nowrap">a</div>
<div class="a" style="left:1253px;top:501.4px;font-size:14px;color:#333;line-height:17px;white-space:nowrap">-l</div>
<div class="a" style="left:1253px;top:527.6px;font-size:14px;color:#333;line-height:17px;white-space:nowrap">-s</div>
<div class="a" style="left:1253px;top:553.9px;font-size:14px;color:#333;line-height:17px;white-space:nowrap">-c</div>
<div class="a" style="left:1253px;top:580.1px;font-size:14px;color:#333;line-height:17px;white-space:nowrap">-c</div>
<div class="a" style="left:1251px;top:604px;width:20px;height:26px;border:1px solid #ccc;border-right:none;border-radius:3px 0 0 3px;background:linear-gradient(#f2f2f2,#e3e3e3)"></div>
<div class="a" style="left:1253px;top:608px;font-size:14px;color:#333;line-height:17px;white-space:nowrap">C</div>
<div class="a" style="left:0;top:972px;width:188px;height:1px;background:#aaa"></div><div class="a" style="left:190px;top:972.5px;width:1040px;height:1px;background:#fff"></div><div class="a" style="left:0;top:973.5px;width:1260px;height:1.5px;background:#aaa"></div>
</body></html>
